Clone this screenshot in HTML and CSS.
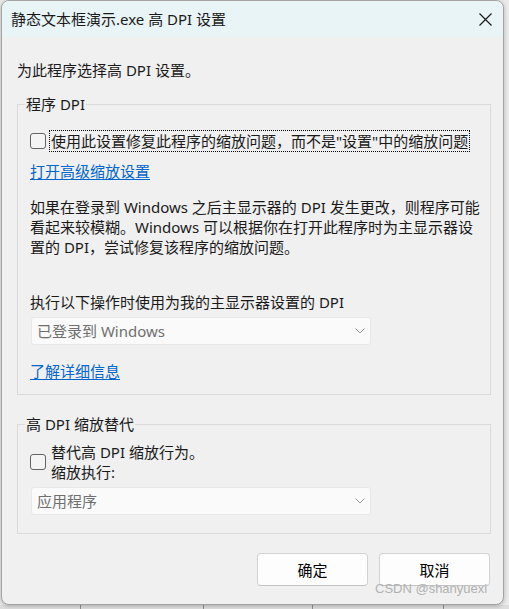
FILE: index.html
```html
<!DOCTYPE html>
<html lang="zh-CN">
<head>
    <meta charset="UTF-8">
    <meta name="viewport" content="width=device-width, initial-scale=1.0">
    <title>高 DPI 设置</title>
    <link rel="stylesheet" href="styles.css">
</head>
<body>
    <div class="window">
        <div class="titlebar">
            <span class="title">静态文本框演示.exe 高 DPI 设置</span>
            <svg class="close" width="13" height="13" viewBox="0 0 13 13">
                <path d="M0.5 0.5L12.5 12.5M12.5 0.5L0.5 12.5" stroke="#1c1c1c" stroke-width="1.2" fill="none"/>
            </svg>
        </div>

        <div class="content">
            <p class="intro">为此程序选择高 DPI 设置。</p>

            <fieldset class="group group-app">
                <legend>程序 DPI</legend>
                <div class="group-body">
                    <div class="check-row">
                        <span class="checkbox"></span>
                        <span class="check-label focused">使用此设置修复此程序的缩放问题，而不是"设置"中的缩放问题</span>
                    </div>
                    <a class="link link-advanced" href="#">打开高级缩放设置</a>
                    <p class="note">如果在登录到 Windows 之后主显示器的 DPI 发生更改，则程序可能<br>看起来较模糊。Windows 可以根据你在打开此程序时为主显示器设<br>置的 DPI，尝试修复该程序的缩放问题。</p>
                    <p class="combo-label">执行以下操作时使用为我的主显示器设置的 DPI</p>
                    <div class="combo">
                        <span>已登录到 Windows</span>
                        <svg width="10" height="6" viewBox="0 0 10 6"><path d="M0.5 0.5L5 5L9.5 0.5" stroke="#9a9a9a" stroke-width="1" fill="none"/></svg>
                    </div>
                    <a class="link link-more" href="#">了解详细信息</a>
                </div>
            </fieldset>

            <fieldset class="group group-override">
                <legend>高 DPI 缩放替代</legend>
                <div class="group-body">
                    <div class="check-row">
                        <span class="checkbox"></span>
                        <span class="check-label plain">替代高 DPI 缩放行为。<br>缩放执行:</span>
                    </div>
                    <div class="combo">
                        <span>应用程序</span>
                        <svg width="10" height="6" viewBox="0 0 10 6"><path d="M0.5 0.5L5 5L9.5 0.5" stroke="#9a9a9a" stroke-width="1" fill="none"/></svg>
                    </div>
                </div>
            </fieldset>

            <div class="buttons">
                <button class="button">确定</button>
                <button class="button">取消</button>
            </div>
        </div>

        <div class="watermark">CSDN @shanyuexi</div>
    </div>

    <!-- window behind the dialog, only its top edge shows -->
    <div class="backdrop">
        <span class="cell cell-first"></span>
        <span class="cell cell-ok">确定</span>
        <span class="cell cell-cancel">取消</span>
        <span class="cell cell-apply">应用(A)</span>
        <span class="cell"></span>
    </div>
</body>
</html>
```

FILE: styles.css
```css
* {
    box-sizing: border-box;
}
body {
    margin: 0;
    height: 609px;
    overflow: hidden;
    background-color: #ebebeb;
    font-family: "Noto Sans", "Noto Sans CJK SC", sans-serif;
    font-size: 15px;
    line-height: 20px;
    color: #1a1a1a;
}
.window {
    position: relative;
    width: 503px;
    height: 605px;
    margin-left: 1px;
    background-color: #f0f0f0;
    border: 1px solid #a3a3a3;
    border-radius: 8px;
    overflow: hidden;
    box-shadow: 0 1px 4px rgba(0, 0, 0, 0.25);
}
.titlebar {
    height: 36px;
    background-color: #e9f4f7;
    display: flex;
    align-items: center;
    justify-content: space-between;
    padding: 0 11px 0 9px;
}
.title {
    white-space: nowrap;
}
.content {
    padding-left: 15px;
}
.intro {
    margin: 23px 0 0;
}
.group {
    width: 474px;
    margin: 14px 0 0;
    padding: 0;
    border: 1px solid #dadada;
    min-width: 0;
}
.group legend {
    padding: 0 1px;
    margin-left: 7px;
    line-height: 20px;
}
.group-body {
    padding: 16px 0 13px 12px;
}
.group-override {
    margin-top: 19px;
}
.group-override .group-body {
    padding: 8px 0 18px 12px;
}
.check-row {
    display: flex;
    align-items: center;
}
.checkbox {
    flex: none;
    width: 16px;
    height: 16px;
    border: 1.5px solid #636363;
    border-radius: 3px;
    background-color: #f4f4f4;
    margin-right: 3px;
}
.check-label {
    white-space: nowrap;
}
.focused {
    border: 1px dotted #000;
    padding: 0 1px;
}
.plain {
    margin-left: 2px;
}
.link {
    display: block;
    width: max-content;
    color: #0066cc;
    text-decoration: underline;
    text-underline-offset: 2px;
}
.link-advanced {
    margin-top: 9px;
}
.note {
    margin: 16px 0 0;
    white-space: nowrap;
}
.combo-label {
    margin: 35px 0 0;
}
.combo {
    width: 340px;
    height: 28px;
    margin: 5px 0 0 1px;
    padding: 0 5px 0 5px;
    background-color: #fafafa;
    border: 1px solid #e8e8e8;
    border-radius: 3px;
    display: flex;
    align-items: center;
    justify-content: space-between;
    color: #6f6f6f;
}
.link-more {
    margin-top: 16px;
}
.buttons {
    width: 474px;
    margin-top: 19px;
    padding-right: 1px;
    display: flex;
    justify-content: flex-end;
    gap: 11px;
}
.button {
    width: 111px;
    height: 33px;
    background-color: #fdfdfd;
    border: 1px solid #d3d3d3;
    border-bottom-color: #c2c2c2;
    border-radius: 4px;
    font: inherit;
    color: #000;
}
.watermark {
    position: absolute;
    left: 373px;
    top: 578px;
    font-family: "Liberation Sans", Arial, sans-serif;
    font-size: 13px;
    color: #b2b2b2;
    white-space: nowrap;
}
.backdrop {
    height: 4px;
    display: flex;
    overflow: hidden;
    background-color: #dedede;
}
.cell {
    border-left: 1px solid #8f8f8f;
    text-align: center;
    line-height: 20px;
    padding-top: 1px;
    color: #333;
}
.cell-first {
    width: 80px;
    border-left: none;
}
.cell-ok {
    width: 123px;
}
.cell-cancel {
    width: 109px;
}
.cell-apply {
    width: 131px;
}
```
